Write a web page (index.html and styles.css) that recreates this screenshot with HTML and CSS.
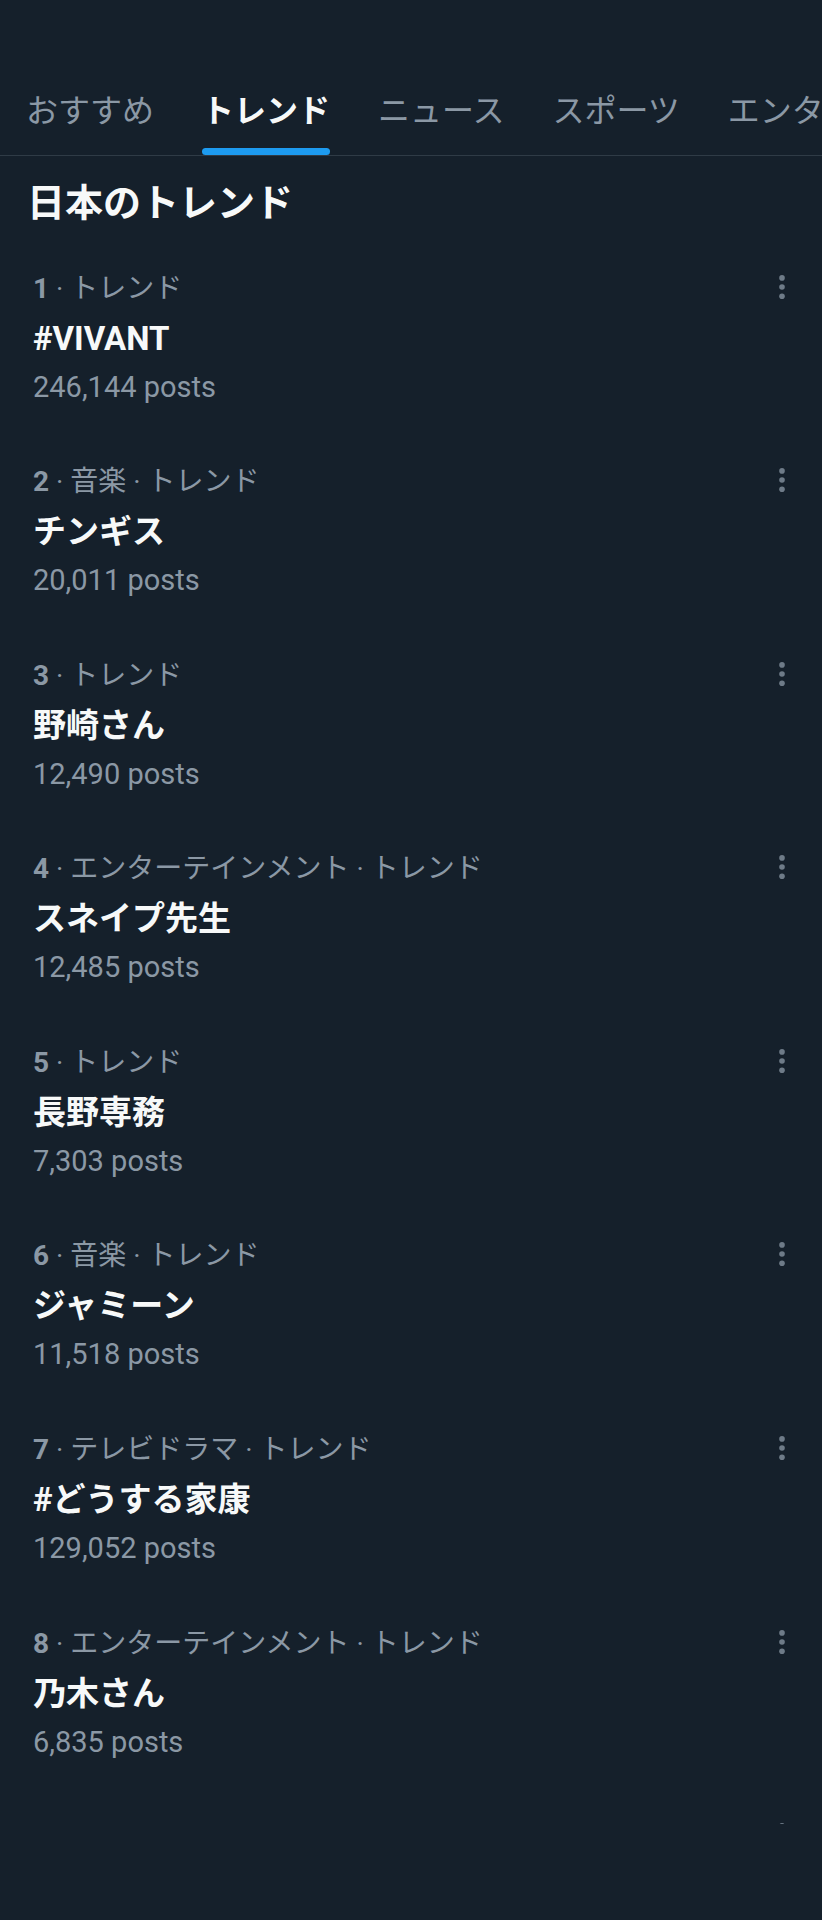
FILE: index.html
```html
<!DOCTYPE html>
<html lang="ja">
  <head>
    <meta charset="UTF-8" />
    <meta name="viewport" content="width=device-width, initial-scale=1.0" />
    <title>トレンド</title>
    <link rel="stylesheet" href="styles.css">
  </head>
  <body>
    <div id="screen">
      <!-- タブ -->
      <nav class="tabs">
        <div class="tab">おすすめ</div>
        <div class="tab active">トレンド</div>
        <div class="tab">ニュース</div>
        <div class="tab">スポーツ</div>
        <div class="tab">エンターテイメント</div>
      </nav>

      <h2 class="section-title">日本のトレンド</h2>

      <!-- トレンド一覧 -->
      <div class="trend-list">
        <div class="trend">
          <div class="trend-body">
            <div class="trend-meta"><span class="rank">1</span> · トレンド</div>
            <div class="trend-name">#VIVANT</div>
            <div class="trend-count">246,144 posts</div>
          </div>
          <svg class="trend-more" viewBox="0 0 24 36"><circle cx="12" cy="6.9" r="2.8"/><circle cx="12" cy="16" r="2.8"/><circle cx="12" cy="25.3" r="2.8"/></svg>
        </div>
        <div class="trend">
          <div class="trend-body">
            <div class="trend-meta"><span class="rank">2</span> · 音楽 · トレンド</div>
            <div class="trend-name">チンギス</div>
            <div class="trend-count">20,011 posts</div>
          </div>
          <svg class="trend-more" viewBox="0 0 24 36"><circle cx="12" cy="6.9" r="2.8"/><circle cx="12" cy="16" r="2.8"/><circle cx="12" cy="25.3" r="2.8"/></svg>
        </div>
        <div class="trend">
          <div class="trend-body">
            <div class="trend-meta"><span class="rank">3</span> · トレンド</div>
            <div class="trend-name">野崎さん</div>
            <div class="trend-count">12,490 posts</div>
          </div>
          <svg class="trend-more" viewBox="0 0 24 36"><circle cx="12" cy="6.9" r="2.8"/><circle cx="12" cy="16" r="2.8"/><circle cx="12" cy="25.3" r="2.8"/></svg>
        </div>
        <div class="trend">
          <div class="trend-body">
            <div class="trend-meta"><span class="rank">4</span> · エンターテインメント · トレンド</div>
            <div class="trend-name">スネイプ先生</div>
            <div class="trend-count">12,485 posts</div>
          </div>
          <svg class="trend-more" viewBox="0 0 24 36"><circle cx="12" cy="6.9" r="2.8"/><circle cx="12" cy="16" r="2.8"/><circle cx="12" cy="25.3" r="2.8"/></svg>
        </div>
        <div class="trend">
          <div class="trend-body">
            <div class="trend-meta"><span class="rank">5</span> · トレンド</div>
            <div class="trend-name">長野専務</div>
            <div class="trend-count">7,303 posts</div>
          </div>
          <svg class="trend-more" viewBox="0 0 24 36"><circle cx="12" cy="6.9" r="2.8"/><circle cx="12" cy="16" r="2.8"/><circle cx="12" cy="25.3" r="2.8"/></svg>
        </div>
        <div class="trend">
          <div class="trend-body">
            <div class="trend-meta"><span class="rank">6</span> · 音楽 · トレンド</div>
            <div class="trend-name">ジャミーン</div>
            <div class="trend-count">11,518 posts</div>
          </div>
          <svg class="trend-more" viewBox="0 0 24 36"><circle cx="12" cy="6.9" r="2.8"/><circle cx="12" cy="16" r="2.8"/><circle cx="12" cy="25.3" r="2.8"/></svg>
        </div>
        <div class="trend">
          <div class="trend-body">
            <div class="trend-meta"><span class="rank">7</span> · テレビドラマ · トレンド</div>
            <div class="trend-name">#どうする家康</div>
            <div class="trend-count">129,052 posts</div>
          </div>
          <svg class="trend-more" viewBox="0 0 24 36"><circle cx="12" cy="6.9" r="2.8"/><circle cx="12" cy="16" r="2.8"/><circle cx="12" cy="25.3" r="2.8"/></svg>
        </div>
        <div class="trend">
          <div class="trend-body">
            <div class="trend-meta"><span class="rank">8</span> · エンターテインメント · トレンド</div>
            <div class="trend-name">乃木さん</div>
            <div class="trend-count">6,835 posts</div>
          </div>
          <svg class="trend-more" viewBox="0 0 24 36"><circle cx="12" cy="6.9" r="2.8"/><circle cx="12" cy="16" r="2.8"/><circle cx="12" cy="25.3" r="2.8"/></svg>
        </div>
        <div class="trend">
          <div class="trend-body">
            <div class="trend-meta"><span class="rank">9</span> · トレンド</div>
            <div class="trend-name">トレンド</div>
            <div class="trend-count">5,120 posts</div>
          </div>
          <svg class="trend-more" viewBox="0 0 24 36"><circle cx="12" cy="6.9" r="2.8"/><circle cx="12" cy="16" r="2.8"/><circle cx="12" cy="25.3" r="2.8"/></svg>
        </div>
      </div>
    </div>
  </body>
</html>
```

FILE: styles.css
```css
body {
  margin: 0;
  padding: 0;
  background-color: #15202b;
  font-family: Roboto, "Noto Sans CJK JP", sans-serif;
  color: #f7f9f9;
}

#screen {
  width: 822px;
  height: 1920px;
  overflow: hidden;
}

.tabs {
  display: flex;
  gap: 48px;
  padding: 86px 0 0 26px;
  border-bottom: 1px solid #2f3b46;
  white-space: nowrap;
  overflow: hidden;
}

.tab {
  display: flex;
  flex-direction: column;
  align-items: stretch;
  font-family: "Noto Sans CJK JP", sans-serif;
  font-size: 32px;
  line-height: 44px;
  color: #8b98a5;
  flex-shrink: 0;
}

.tab::after {
  content: "";
  height: 6.5px;
  margin-top: 18px;
  margin-bottom: 0.5px;
  border-radius: 4px;
  background: transparent;
}

.tab.active {
  color: #f7f9f9;
  font-weight: bold;
}

.tab.active::after {
  background: #1d9bf0;
}

.section-title {
  margin: 19px 0 16.5px 27px;
  font-family: "Noto Sans CJK JP", sans-serif;
  font-size: 38px;
  line-height: 50px;
  font-weight: bold;
}

.trend-list {
  height: 1582.6px;
  overflow: hidden;
}

.trend {
  display: flex;
  justify-content: space-between;
  align-items: flex-start;
  padding: 29px 28px 28.6px 33px;
}

.trend-meta {
  font-size: 28px;
  line-height: 36px;
  color: #8b98a5;
}

.trend-meta .rank {
  font-weight: bold;
}

.trend-name {
  margin-top: 10px;
  font-size: 33px;
  line-height: 44px;
  font-weight: bold;
}

.trend-count {
  margin-top: 6px;
  font-size: 29px;
  line-height: 40px;
  color: #8b98a5;
}

.trend-more {
  width: 24px;
  height: 36px;
  fill: #6e7b88;
}
```
